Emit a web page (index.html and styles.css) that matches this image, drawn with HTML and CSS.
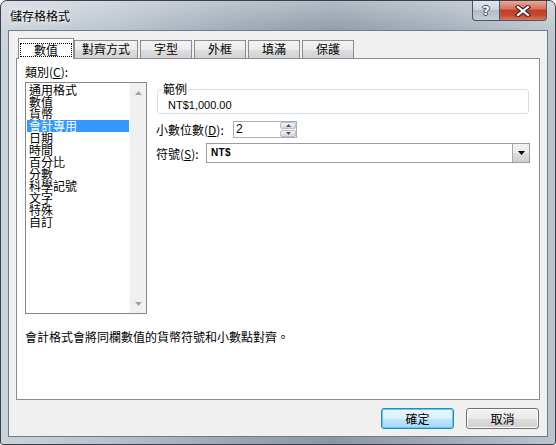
FILE: index.html
```html
<!DOCTYPE html>
<html lang="zh-Hant">
<head>
<meta charset="utf-8">
<title>儲存格格式</title>
<link rel="stylesheet" href="styles.css">
</head>
<body>
<div class="window">
  <div class="titlebar">
    <span class="title">儲存格格式</span>
    <div class="caption">
      <div class="cb help"><span class="qmark">?</span></div>
      <div class="cb close">
        <svg width="16" height="12" viewBox="0 0 16 12">
          <path d="M3 2 L13 10 M13 2 L3 10" stroke="#3a2a28" stroke-width="4.4" stroke-linecap="square" fill="none"/>
          <path d="M3 2 L13 10 M13 2 L3 10" stroke="#ffffff" stroke-width="2.2" stroke-linecap="square" fill="none"/>
        </svg>
      </div>
    </div>
  </div>
  <div class="client">
    <div class="tabs">
      <div class="tab selected"><span class="focus">數值</span></div>
      <div class="tab">對齊方式</div>
      <div class="tab">字型</div>
      <div class="tab">外框</div>
      <div class="tab">填滿</div>
      <div class="tab">保護</div>
    </div>
    <div class="panel">
      <div class="panel-body">
        <div class="left">
          <div class="label">類別(<u>C</u>):</div>
          <div class="listbox">
            <ul class="items">
              <li>通用格式</li>
              <li>數值</li>
              <li>貨幣</li>
              <li class="sel">會計專用</li>
              <li>日期</li>
              <li>時間</li>
              <li>百分比</li>
              <li>分數</li>
              <li>科學記號</li>
              <li>文字</li>
              <li>特殊</li>
              <li>自訂</li>
            </ul>
            <div class="vscroll">
              <svg width="7" height="4" viewBox="0 0 7 4"><path d="M0 4 L3.5 0 L7 4 Z" fill="#a4a4a4"/></svg>
              <svg width="7" height="4" viewBox="0 0 7 4"><path d="M0 0 L7 0 L3.5 4 Z" fill="#a4a4a4"/></svg>
            </div>
          </div>
        </div>
        <div class="right">
          <fieldset class="sample">
            <legend>範例</legend>
            <div class="sample-value">NT$1,000.00</div>
          </fieldset>
          <div class="row spin-row">
            <span class="row-label w-dec">小數位數(<u>D</u>):</span>
            <div class="spin">
              <span class="spin-value">2</span>
              <div class="spin-btns">
                <div class="sbtn"><svg width="5" height="3" viewBox="0 0 5 3"><path d="M0 3 L2.5 0 L5 3 Z" fill="#3e5479"/></svg></div>
                <div class="sbtn"><svg width="5" height="3" viewBox="0 0 5 3"><path d="M0 0 L5 0 L2.5 3 Z" fill="#3e5479"/></svg></div>
              </div>
            </div>
          </div>
          <div class="row combo-row">
            <span class="row-label w-sym">符號(<u>S</u>):</span>
            <div class="combo">
              <span class="combo-value">NT$</span>
              <div class="combo-btn"><svg width="7" height="4" viewBox="0 0 7 4"><path d="M0 0 L7 0 L3.5 4 Z" fill="#000"/></svg></div>
            </div>
          </div>
        </div>
      </div>
      <p class="desc">會計格式會將同欄數值的貨幣符號和小數點對齊。</p>
    </div>
    <div class="buttons">
      <div class="btn default">確定</div>
      <div class="btn">取消</div>
    </div>
  </div>
</div>
</body>
</html>
```

FILE: styles.css
```css
* { box-sizing: border-box; }
html, body { margin: 0; padding: 0; background: #ffffff; }
body {
  font-family: "Noto Sans CJK TC", "Liberation Sans", sans-serif;
  font-size: 12px;
  color: #000;
}
u { text-decoration: underline; text-underline-offset: 1px; }

.window {
  width: 556px;
  height: 445px;
  border: 1px solid #3b4048;
  border-radius: 7px 7px 3px 3px;
  overflow: hidden;
  display: flex;
  flex-direction: column;
  background:
    linear-gradient(to bottom, rgba(255,255,255,0.35) 0px, rgba(255,255,255,0.05) 30px, rgba(255,255,255,0) 60px),
    linear-gradient(to right, #cbd3db 0%, #b7c1cb 20%, #9aa6b3 42%, #8a97a5 60%, #a2adb9 82%, #bcc5ce 100%);
}

.titlebar {
  height: 29px;
  display: flex;
  justify-content: space-between;
  align-items: flex-start;
  padding-left: 9px;
  flex: none;
}
.title {
  line-height: 29px;
  font-size: 12px;
  color: #000;
  text-shadow: 0 0 6px #ffffff, 0 0 3px rgba(255,255,255,0.9);
}
.caption {
  display: flex;
  margin-right: 8px;
}
.cb {
  height: 20px;
  border: 1px solid #4d5560;
  border-top: none;
  display: flex;
  align-items: center;
  justify-content: center;
}
.help {
  width: 28px;
  border-radius: 0 0 0 4px;
  background: linear-gradient(to bottom, #e4e8ed 0%, #cdd4dc 45%, #b2bcc7 50%, #c6ced7 100%);
}
.qmark {
  font-family: "DejaVu Sans", sans-serif;
  font-weight: bold;
  font-size: 13px;
  line-height: 14px;
  color: #ffffff;
  text-shadow: 1px 0 0 #3f4650, -1px 0 0 #3f4650, 0 1px 0 #3f4650, 0 -1px 0 #3f4650;
}
.close {
  width: 47px;
  border-left: none;
  border-radius: 0 0 4px 0;
  background: linear-gradient(to bottom, #e9a899 0%, #d9735e 40%, #c2402a 50%, #c6482f 75%, #d77b61 100%);
}

.client {
  margin: 0 7px;
  height: 407px;
  border: 1px solid #6f7b88;
  background: #f0f0f0;
  padding: 7px 7px 0 7px;
  flex: none;
}

.tabs {
  display: flex;
  align-items: flex-end;
  height: 20px;
  padding-left: 4px;
  gap: 2px;
}
.tab {
  min-width: 52px;
  height: 18px;
  padding: 0 7px;
  border: 1px solid #898c95;
  border-bottom: none;
  line-height: 16px;
  text-align: center;
  white-space: nowrap;
  background: linear-gradient(to bottom, #f3f3f3 0%, #ebebeb 50%, #dddddd 52%, #d3d3d3 100%);
}
.tab.selected {
  position: relative;
  z-index: 1;
  min-width: 56px;
  height: 21px;
  margin: 0 -2px -1px -2px;
  padding: 4px 1px 0 1px;
  background: #ffffff;
}
.focus {
  display: block;
  height: 14px;
  line-height: 12px;
  border: 1px dotted #000;
}

.panel {
  height: 342px;
  border: 1px solid #898c95;
  background: #ffffff;
  padding: 6px 8px 0 8px;
}
.panel-body {
  display: flex;
  align-items: flex-start;
  gap: 9px;
}
.left { width: 122px; }
.label { line-height: 14px; height: 14px; }
.listbox {
  margin-top: 3px;
  height: 232px;
  border: 1px solid #828790;
  display: flex;
}
.items {
  list-style: none;
  margin: 0;
  padding: 1px 0 0 1px;
  flex: 1;
}
.items li {
  height: 12px;
  line-height: 12px;
  padding-left: 2px;
  white-space: nowrap;
}
.items li.sel {
  background: #3399ff;
  color: #ffffff;
}
.vscroll {
  width: 17px;
  background: #f0f0f0;
  border-left: 1px solid #f7f7f7;
  display: flex;
  flex-direction: column;
  justify-content: space-between;
  align-items: center;
  padding: 8px 0 7px 0;
}

.right {
  width: 374px;
  margin-top: 18px;
}
.sample {
  margin: 0 1px;
  padding: 4px 0 2px 4px;
  border: 1px solid #d5dfe5;
  border-radius: 3px;
}
.sample legend {
  padding: 0 1px;
  line-height: 12px;
  font-size: 12px;
}
.sample-value {
  padding-left: 6px;
  line-height: 12px;
  height: 12px;
  font-family: "Liberation Sans", sans-serif;
  font-size: 11px;
}

.row {
  display: flex;
  align-items: center;
}
.spin-row { margin-top: 7px; }
.combo-row { margin-top: 5px; }
.row-label { white-space: nowrap; }
.w-dec { width: 77px; }
.w-sym { width: 50px; }

.spin {
  width: 64px;
  height: 17px;
  border: 1px solid #abadb3;
  background: #fff;
  display: flex;
  justify-content: space-between;
}
.spin-value {
  padding-left: 2px;
  line-height: 15px;
  font-family: "Liberation Sans", sans-serif;
  font-size: 12px;
}
.spin-btns {
  width: 16px;
  display: flex;
  flex-direction: column;
  gap: 1px;
  padding: 0 0 0 0;
}
.sbtn {
  flex: 1;
  display: flex;
  align-items: center;
  justify-content: center;
  border: 1px solid #b7bcc6;
  border-radius: 2px;
  background: linear-gradient(to bottom, #f5f6f8 0%, #e3e6ea 50%, #d4d9df 100%);
}

.combo {
  width: 324px;
  height: 20px;
  border: 1px solid #9c9c9c;
  background: #fff;
  display: flex;
  justify-content: space-between;
  align-items: stretch;
}
.combo-value {
  padding-left: 4px;
  line-height: 18px;
  font-family: "Liberation Sans", sans-serif;
  font-weight: bold;
  font-size: 10px;
  letter-spacing: 0.3px;
}
.combo-btn {
  width: 17px;
  margin: 0;
  border-left: 1px solid #a9a9a9;
  background: linear-gradient(to bottom, #f2f2f2 0%, #ebebeb 50%, #dddddd 51%, #cfcfcf 100%);
  display: flex;
  align-items: center;
  justify-content: center;
}

.desc {
  margin: 16px 0 0 0;
  line-height: 14px;
  white-space: nowrap;
}

.buttons {
  margin-top: 8px;
  display: flex;
  justify-content: flex-end;
  gap: 12px;
  padding-right: 1px;
}
.btn {
  width: 73px;
  height: 21px;
  border: 1px solid #707070;
  border-radius: 3px;
  line-height: 19px;
  text-align: center;
  background: linear-gradient(to bottom, #f2f2f2 0%, #ebebeb 50%, #dddddd 51%, #cfcfcf 100%);
  box-shadow: inset 0 0 0 1px #fcfcfc;
}
.btn.default {
  border-color: #3c7fb1;
  box-shadow: inset 0 0 0 1px #48d5fc;
  background: linear-gradient(to bottom, #eaf6fd 0%, #d9f0fc 50%, #bee6fd 51%, #a7d9f5 100%);
}
```
